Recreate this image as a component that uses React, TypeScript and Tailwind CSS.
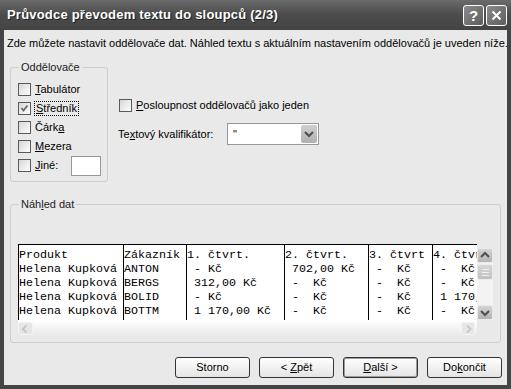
import React from 'react';

const rows = [
  ['Produkt', 'Zákazník', '1. čtvrt.', '2. čtvrt.', '3. čtvrt', '4. čtvrt'],
  ['Helena Kupková', 'ANTON', ' - Kč', ' 702,00 Kč', ' -  Kč', ' -  Kč'],
  ['Helena Kupková', 'BERGS', ' 312,00 Kč', ' -  Kč', ' -  Kč', ' -  Kč'],
  ['Helena Kupková', 'BOLID', ' - Kč', ' -  Kč', ' -  Kč', ' 1 170,00 Kč'],
  ['Helena Kupková', 'BOTTM', ' 1 170,00 Kč', ' -  Kč', ' -  Kč', ' -  Kč'],
];

const colWidths = ['w-[105px]', 'w-[63px]', 'w-[98px]', 'w-[84px]', 'w-[64px]', 'w-[45px]'];

const CheckBox = ({ checked }: { checked?: boolean }) => (
  <span className="relative block w-[13px] h-[13px] shrink-0 border border-[#5a5a5a] bg-linear-to-br from-[#d6d6d6] to-white">
    {checked && (
      <svg width="11" height="11" viewBox="0 0 11 11" className="absolute left-0 top-0">
        <path d="M2.5 5 L4.5 7.5 L8.5 2.5" fill="none" stroke="#6e6e6e" strokeWidth="2" />
      </svg>
    )}
  </span>
);

const Chevron = ({ dir, color = '#4e4e4e' }: { dir: 'up' | 'down' | 'left' | 'right'; color?: string }) => {
  const d = {
    up: 'M3 8 L7 4 L11 8',
    down: 'M3 5 L7 9 L11 5',
    left: 'M8 3 L4 7 L8 11',
    right: 'M6 3 L10 7 L6 11',
  }[dir];
  return (
    <svg width="14" height="14" viewBox="0 0 14 14">
      <path d={d} fill="none" stroke={color} strokeWidth="2" />
    </svg>
  );
};

const Option = ({ children, checked, focus }: { children: React.ReactNode; checked?: boolean; focus?: boolean }) => (
  <div className="flex items-center h-[19px]">
    <CheckBox checked={checked} />
    <span className={`ml-[4px] leading-[13px] ${focus ? 'outline outline-1 outline-dotted outline-black px-[1px]' : ''}`}>
      {children}
    </span>
  </div>
);

const Btn = ({ children, primary }: { children: React.ReactNode; primary?: boolean }) => (
  <button
    className={`w-[75px] h-[21px] rounded-[3px] border border-[#333] bg-linear-to-b from-white to-[#e4e4e4] text-[11px] text-black flex items-center justify-center ${
      primary ? 'shadow-[inset_0_0_0_1px_#9c9c9c]' : ''
    }`}
  >
    <span className="whitespace-pre">{children}</span>
  </button>
);

export default function App() {
  return (
    <div className="w-[511px] h-[389px] bg-[#454545] flex flex-col font-['Liberation_Sans',Arial,sans-serif] text-[11px] text-black overflow-hidden">
      {/* title bar */}
      <div className="h-[30px] shrink-0 flex items-center bg-linear-to-b from-[#6b6b6b] via-[#4b4b4b] to-[#444] px-[7px]">
        <span className="text-white font-bold text-[13px] tracking-[0.2px] [text-shadow:1px_1px_0_#222]">
          Průvodce převodem textu do sloupců (2/3)
        </span>
        <div className="ml-auto flex gap-[2px] mr-[-3px]">
          <div className="w-[21px] h-[21px] rounded-[3px] border border-white bg-linear-to-br from-[#8c8c8c] to-[#5c5c5c] flex items-center justify-center text-white font-bold text-[15px] leading-none">
            ?
          </div>
          <div className="w-[21px] h-[21px] rounded-[3px] border border-white bg-linear-to-br from-[#8c8c8c] to-[#5c5c5c] flex items-center justify-center">
            <svg width="11" height="11" viewBox="0 0 11 11">
              <path d="M1.5 1.5 L9.5 9.5 M9.5 1.5 L1.5 9.5" stroke="white" strokeWidth="2" />
            </svg>
          </div>
        </div>
      </div>

      {/* body */}
      <div className="flex-1 mx-[4px] mb-[4px] bg-[#e9e9e9] flex flex-col">
        <p className="mt-[7px] pl-[3px] leading-[13px] whitespace-nowrap">
          Zde můžete nastavit oddělovače dat. Náhled textu s aktuálním nastavením oddělovačů je uveden níže.
        </p>

        <div className="flex mt-[11px]">
          <fieldset className="ml-[6px] w-[98px] h-[121px] border border-[#cdcdcd] rounded-[3px] pl-[7px] pt-[6px]">
            <legend className="ml-[1px] px-[2px] leading-[13px] text-[#222]">Oddělovače</legend>
            <Option>
              <u className="underline-offset-1">T</u>abulátor
            </Option>
            <Option checked focus>
              <u className="underline-offset-1">S</u>tředník
            </Option>
            <Option>
              Čárk<u className="underline-offset-1">a</u>
            </Option>
            <Option>
              <u className="underline-offset-1">M</u>ezera
            </Option>
            <div className="flex items-center h-[19px]">
              <CheckBox />
              <span className="ml-[4px] leading-[13px]">
                <u className="underline-offset-1">J</u>iné:
              </span>
              <div className="ml-[13px] w-[30px] h-[20px] border border-[#979797] bg-white" />
            </div>
          </fieldset>

          <div className="ml-[10px] flex flex-col">
            <div className="mt-[35px] ml-[1px]">
              <Option>
                <u className="underline-offset-1">P</u>osloupnost oddělovačů jako jeden
              </Option>
            </div>
            <div className="mt-[8px] flex items-center">
              <span className="w-[109px] leading-[13px]">
                Te<u className="underline-offset-1">x</u>tový kvalifikátor:
              </span>
              <div className="w-[92px] h-[22px] border border-[#979797] bg-white flex items-center">
                <span className="ml-[5px] flex-1">"</span>
                <div className="w-[16px] h-[18px] mr-[1px] rounded-[2px] bg-linear-to-b from-[#d0d0d0] to-[#b0b0b0] flex items-center justify-center">
                  <Chevron dir="down" />
                </div>
              </div>
            </div>
          </div>
        </div>

        <fieldset className="ml-[6px] mt-[16px] w-[491px] h-[145px] border border-[#cdcdcd] rounded-[3px] pl-[7px] pt-[33px]">
          <legend className="ml-[1px] px-[2px] leading-[13px] text-[#222]">
            Náh<u className="underline-offset-1">l</u>ed dat
          </legend>
          <div className="w-[475px] h-[94px] flex flex-col">
            <div className="flex h-[76px]">
              <div className="w-[459px] border-t border-black bg-white flex overflow-hidden font-['Liberation_Mono','Courier_New',monospace] text-[11.67px] leading-[14px]">
                {colWidths.map((w, c) => (
                  <div key={c} className={`${w} shrink-0 border-l border-black pt-[3px] overflow-hidden`}>
                    {rows.map((r, i) => (
                      <div key={i} className="h-[14px] whitespace-pre">
                        {r[c]}
                      </div>
                    ))}
                  </div>
                ))}
              </div>
              <div className="w-[16px] pt-[4px] flex flex-col">
                <div className="flex-1 flex flex-col bg-[#f3f3f3]">
                  <div className="h-[15px] rounded-[2px] bg-linear-to-b from-[#d4d4d4] to-[#b4b4b4] border border-[#e9e9e9] flex items-center justify-center">
                    <Chevron dir="up" />
                  </div>
                  <div className="h-[16px] mt-[1px] rounded-[2px] bg-linear-to-b from-[#d8d8d8] to-[#c0c0c0] border border-[#ececec] flex flex-col items-center justify-center gap-[2px]">
                    <span className="block w-[7px] h-px bg-[#f0f0f0]" />
                    <span className="block w-[7px] h-px bg-[#f0f0f0]" />
                    <span className="block w-[7px] h-px bg-[#f0f0f0]" />
                  </div>
                  <div className="flex-1" />
                  <div className="h-[15px] rounded-[2px] bg-linear-to-b from-[#d4d4d4] to-[#b4b4b4] border border-[#e9e9e9] flex items-center justify-center">
                    <Chevron dir="down" />
                  </div>
                </div>
              </div>
            </div>
            <div className="h-[17px] flex">
              <div className="w-[459px] flex items-center bg-linear-to-b from-white to-[#e7e7e7]">
                <div className="w-[15px] h-[13px] rounded-[2px] bg-[#e6e6e6] border border-[#f4f4f4] flex items-center justify-center">
                  <Chevron dir="left" color="#c4c4c4" />
                </div>
                <div className="flex-1" />
                <div className="w-[14px] h-[13px] mr-[2px] rounded-[2px] bg-[#e6e6e6] border border-[#f4f4f4] flex items-center justify-center">
                  <Chevron dir="right" color="#c4c4c4" />
                </div>
              </div>
            </div>
          </div>
        </fieldset>

        <div className="mt-[14px] flex justify-end gap-[9px] pr-[5px]">
          <Btn>Storno</Btn>
          <Btn>
            {'< '}
            <u className="underline-offset-1">Z</u>pět
          </Btn>
          <Btn primary>
            <u className="underline-offset-1">D</u>alší &gt;
          </Btn>
          <Btn>
            Do<u className="underline-offset-1">k</u>ončit
          </Btn>
        </div>
      </div>
    </div>
  );
}
